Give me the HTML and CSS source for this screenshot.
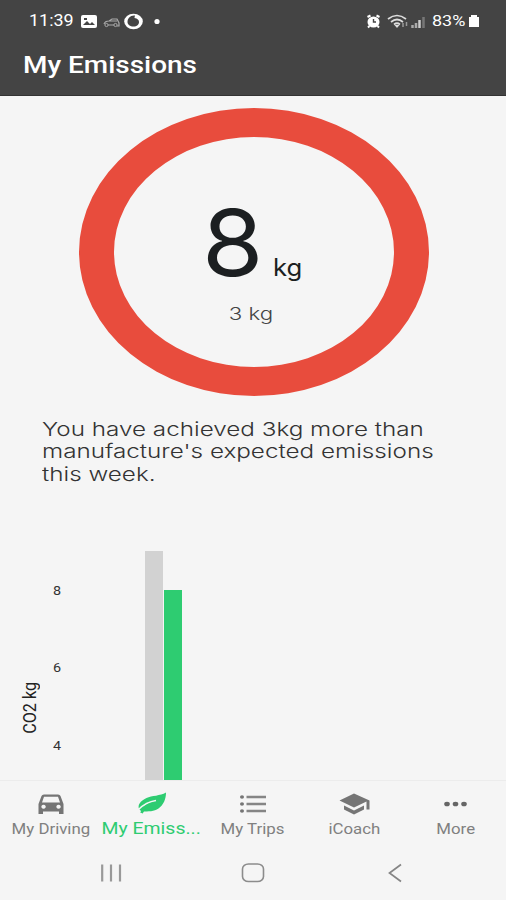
FILE: index.html
```html
<!DOCTYPE html>
<html lang="en">
<head>
    <meta charset="UTF-8">
    <meta name="viewport" content="width=device-width, initial-scale=1.0">
    <title>My Emissions</title>
    <link rel="stylesheet" href="styles.css">
</head>
<body>
    <div class="app">
        <header class="header">
            <div class="status-bar">
                <span class="clock">11:39</span>
                <svg class="status-left" width="82" height="20" viewBox="0 0 82 20">
                    <rect x="1" y="4" width="16" height="13" rx="2" fill="#fff"/>
                    <path d="M3 14l4-4 3 3 2-2 3 3z" fill="#444"/>
                    <rect x="4" y="7" width="3" height="2" fill="#444"/>
                    <path d="M24 13q1-3 5-3l3-2h5l2 4v3h-2M29 10h8M28 14h6" fill="none" stroke="#aaa" stroke-width="1.2"/>
                    <circle cx="26.500" cy="14" r="1.600" fill="none" stroke="#aaa"/>
                    <circle cx="35.500" cy="14" r="1.600" fill="none" stroke="#aaa"/>
                    <ellipse cx="53.500" cy="10.500" rx="9.300" ry="7.800" fill="#fff"/>
                    <path d="M54 4.500c-4 0-6.500 3-6.500 6.500 0 2.500 2.500 4.500 6 4.500s5.500-2 5.500-4.500c0-2-1.500-3.500-4.500-4 0-1 .5-2 .5-2.500z" fill="#444"/>
                    <circle cx="77" cy="10.500" r="2.600" fill="#fff"/>
                </svg>
                <svg class="status-right" width="62" height="20" viewBox="0 0 62 20">
                    <ellipse cx="8.500" cy="11" rx="6" ry="5.500" fill="#fff"/>
                    <path d="M2.500 6l3-1.500M14.500 6l-3-1.500M4.500 15l-1.500 1.500M12.500 15l1.500 1.500" stroke="#fff" stroke-width="2"/>
                    <path d="M8.500 8V11h2.500" fill="none" stroke="#444" stroke-width="1.400"/>
                    <path d="M23 8q9-7 18 0M26 11q6-5 12 0M29 13.500q3-2.500 6 0" fill="none" stroke="#ddd" stroke-width="1.700"/>
                    <path d="M32 17l-2.500-3h5z" fill="#ddd"/>
                    <path d="M38 12v4M41.500 11v4" stroke="#999" stroke-width="1.500"/>
                    <path d="M47.500 17v-3M51 17v-5" stroke="#aaa" stroke-width="2.500"/>
                    <path d="M54.500 17V9" stroke="#ccc" stroke-width="2.500"/>
                    <path d="M58.500 17V6" stroke="#777" stroke-width="2.500"/>
                </svg>
                <span class="battery-text">83%</span>
                <svg class="battery" width="12" height="14" viewBox="0 0 12 14">
                    <path d="M3 1h6v2h2v10H1V3h2z" fill="#fff"/>
                </svg>
            </div>
            <h1 class="title">My Emissions</h1>
        </header>

        <main class="content">
            <div class="ring">
                <div class="total">
                    <span class="total-value">8</span>
                    <span class="total-unit">kg</span>
                </div>
                <div class="difference">3 kg</div>
            </div>

            <p class="message">
                <span class="line">You have achieved 3kg more than</span>
                <span class="line">manufacture's expected emissions</span>
                <span class="line">this week.</span>
            </p>

            <div class="chart">
                <div class="axis-title"><span>CO2 kg</span></div>
                <div class="axis">
                    <span>8</span>
                    <span>6</span>
                    <span>4</span>
                </div>
                <div class="bars">
                    <div class="bar expected"></div>
                    <div class="bar actual"></div>
                </div>
            </div>
        </main>

        <nav class="tabs">
            <a class="tab">
                <svg width="28" height="24" viewBox="0 0 28 24">
                    <path fill-rule="evenodd" fill="#757575" d="M4.500 3Q5 1.500 7 1.500H21Q23 1.500 23.500 3L26.500 11V21H22V18.500H6V21H1.500V11zM7 3.800L5 9.500H23L21 3.800zM6.500 11.800a2.200 2 0 1 0 .1 0zM21.500 11.800a2.200 2 0 1 0 .1 0z"/>
                </svg>
                <span class="label">My Driving</span>
            </a>
            <a class="tab active">
                <svg width="30" height="24" viewBox="0 0 30 24">
                    <path fill="#2ecc71" d="M29-.5C23 3 15 2.500 9.500 5C3 8 .5 12 2 16L4.500 18.500C12 18.500 17 18.500 21.500 15.500C26.500 12 29 6 29-.5z"/>
                    <path d="M1.500 16.500Q9 9 19 7.500" fill="none" stroke="#f5f5f5" stroke-width="1.500"/>
                    <path d="M4.500 20Q7 14 13 11.500" fill="none" stroke="#2ecc71" stroke-width="2.800"/>
                </svg>
                <span class="label">My Emiss...</span>
            </a>
            <a class="tab">
                <svg width="28" height="24" viewBox="0 0 28 24">
                    <path d="M7.500 4H27M7.500 11H27M7.500 18H27" stroke="#858585" stroke-width="2.500"/>
                    <g fill="#757575"><ellipse cx="3" cy="4" rx="2" ry="1.800"/><ellipse cx="3" cy="11" rx="2" ry="1.800"/><ellipse cx="3" cy="18" rx="2" ry="1.800"/></g>
                </svg>
                <span class="label">My Trips</span>
            </a>
            <a class="tab">
                <svg width="32" height="24" viewBox="0 0 32 24">
                    <path fill="#757575" d="M16 .5L1.500 7.500 16 14.500 28.500 8.500V16.500H31.500V7.500zM6 12.500V16.500L16 21.500 26 16.500V12.500L16 17.500z"/>
                </svg>
                <span class="label">iCoach</span>
            </a>
            <a class="tab">
                <svg width="28" height="24" viewBox="0 0 28 24">
                    <g fill="#666"><ellipse cx="6" cy="11" rx="2.800" ry="2.300"/><ellipse cx="14.500" cy="11" rx="2.800" ry="2.300"/><ellipse cx="23" cy="11" rx="2.800" ry="2.300"/></g>
                </svg>
                <span class="label">More</span>
            </a>
        </nav>

        <div class="system-nav">
            <svg width="24" height="20" viewBox="0 0 24 20">
                <path d="M3.200 1.500V18.500M12 1.500V18.500M21 1.500V18.500" stroke="#999" stroke-width="2.200"/>
            </svg>
            <svg width="24" height="20" viewBox="0 0 24 20">
                <rect x="1.500" y="1" width="21" height="17.500" rx="6" ry="5" fill="none" stroke="#8c8c8c" stroke-width="1.600"/>
            </svg>
            <svg width="24" height="20" viewBox="0 0 24 20">
                <path d="M18 1.500L6.500 10 18 18.500" fill="none" stroke="#858585" stroke-width="1.700"/>
            </svg>
        </div>
    </div>
</body>
</html>
```

FILE: styles.css
```css
* {
    box-sizing: border-box;
}
body {
    margin: 0;
    font-family: Roboto, sans-serif;
    background-color: #f5f5f5;
    color: #222;
}
.app {
    display: flex;
    flex-direction: column;
    height: 900px;
    overflow: hidden;
}
.app svg {
    display: block;
    flex-shrink: 0;
    overflow: visible;
}
.header {
    height: 96px;
    background: #444;
    border-bottom: 1px solid #333;
    color: #fff;
    flex-shrink: 0;
}
.status-bar {
    display: flex;
    align-items: center;
    height: 41px;
    padding: 0 26px 0 29px;
    white-space: nowrap;
}
.clock {
    width: 51px;
    font-size: 16px;
    transform: scaleX(1.12);
    transform-origin: left;
}
.status-right {
    margin-left: auto;
    margin-right: 5px;
}
.battery-text {
    width: 36px;
    font-size: 15px;
    transform: scaleX(1.2);
    transform-origin: left;
}
.title {
    margin: 10px 0 0 23px;
    font-size: 23px;
    line-height: 30px;
    font-weight: 500;
    transform: scaleX(1.215);
    transform-origin: left;
}
.content {
    flex: 1;
    min-height: 0;
    overflow: hidden;
    padding-top: 12px;
}
.ring {
    width: 350px;
    height: 288px;
    margin-left: 79px;
    border: solid #e84c3d;
    border-width: 29px 35px;
    border-radius: 50%;
    padding-top: 58px;
}
.total {
    display: flex;
    align-items: baseline;
    height: 96px;
    padding-left: 88px;
    font-family: Inter, sans-serif;
    color: #1c1f21;
}
.total-value {
    width: 71px;
    font-size: 92px;
    line-height: 96px;
    transform: scaleX(1.08);
    transform-origin: left;
}
.total-unit {
    font-size: 24px;
    transform: scaleX(1.07);
    transform-origin: left;
}
.difference {
    margin-top: 10px;
    font-family: Inter, sans-serif;
    font-size: 17px;
    line-height: 26px;
    font-weight: 300;
    text-align: center;
    color: #444;
    transform: translateX(-3px) scaleX(1.31);
}
.message {
    margin: 23px 0 0 42px;
    font-family: Inter, sans-serif;
    font-size: 19px;
    line-height: 22.3px;
    font-weight: 300;
    color: #333;
}
.line {
    display: block;
    white-space: nowrap;
    transform: scaleX(1.276);
    transform-origin: left;
}
.chart {
    display: flex;
    height: 229px;
    margin-top: 65px;
}
.axis-title {
    width: 42px;
    padding: 128px 0 0 19px;
    font-size: 18px;
}
.axis-title span {
    display: block;
    writing-mode: vertical-rl;
    transform: rotate(180deg) scaleY(0.9);
}
.axis {
    width: 30px;
    padding: 30px 0 0 10.5px;
    font-size: 12px;
    line-height: 20px;
    color: #333;
}
.axis span {
    display: block;
    height: 77.5px;
    transform: scaleX(1.2);
    transform-origin: left;
}
.bars {
    display: flex;
    align-items: flex-end;
    gap: 1px;
    padding-left: 72.5px;
}
.bar {
    width: 18px;
}
.expected {
    height: 229px;
    background: #d2d2d2;
}
.actual {
    height: 190px;
    background: #2ecc71;
}
.tabs {
    display: flex;
    height: 67px;
    border-top: 1px solid #ececec;
    flex-shrink: 0;
}
.tab {
    flex: 1 1 0;
    min-width: 0;
    display: flex;
    flex-direction: column;
    align-items: center;
    padding-top: 12px;
}
.label {
    margin-top: 3px;
    font-size: 14.5px;
    line-height: 20px;
    white-space: nowrap;
    color: #808080;
    transform: scaleX(1.16);
}
.active .label {
    margin-top: 2px;
    color: #2ecc71;
    font-size: 16.5px;
    transform: translateX(-1px) scaleX(1.18);
}
.system-nav {
    display: flex;
    justify-content: space-between;
    padding: 16px 99px 17px;
    flex-shrink: 0;
}
```
